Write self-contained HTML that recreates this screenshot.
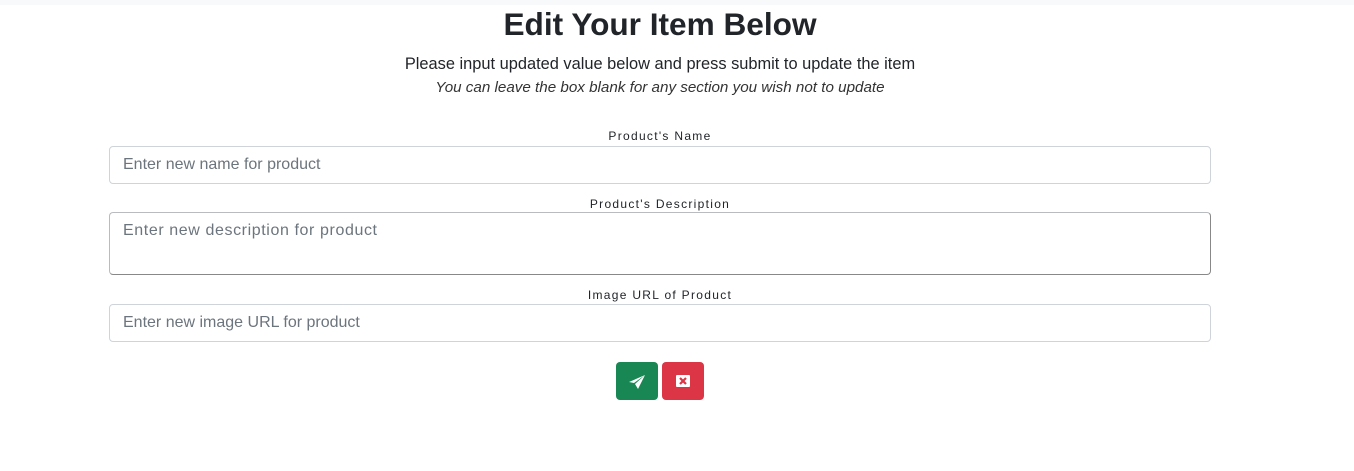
<!DOCTYPE html>
<html><head><style>
body{margin:0;background:#fff;font-family:"Liberation Sans",sans-serif;color:#212529;width:1354px;height:471px;overflow:hidden;position:relative}
.top{position:absolute;left:0;top:0;width:1354px;height:5px;background:#f8f9fa}
.c{position:absolute;left:0;width:1320px;text-align:center;white-space:nowrap}
.box{position:absolute;left:109px;width:1102px;border:1px solid #ced4da;border-radius:4px;background:#fff;font-size:16px;color:#6c757d;box-sizing:border-box;padding-left:13px}
.lbl{font-size:12px;letter-spacing:1.3px}
.btn{position:absolute;top:362px;width:42px;height:38px;border-radius:4px}
</style></head><body>
<div class="top"></div>
<div class="c" style="top:6px;font-size:31.6px;font-weight:bold">Edit Your Item Below</div>
<div class="c" style="top:55px;font-size:16.4px">Please input updated value below and press submit to update the item</div>
<div class="c" style="top:79px;font-size:15.2px;font-style:italic;color:#333">You can leave the box blank for any section you wish not to update</div>
<div class="c lbl" style="top:129px">Product's Name</div>
<div class="box" style="top:146px;height:38px;line-height:36px">Enter new name for product</div>
<div class="c lbl" style="top:197px">Product's Description</div>
<div class="box" style="top:212px;height:63px;padding-top:9px;letter-spacing:0.6px;border-color:#b8bcc0;border-right-color:#888;border-bottom-color:#888">Enter new description for product</div>
<div class="c lbl" style="top:288px">Image URL of Product</div>
<div class="box" style="top:304px;height:38px;line-height:36px">Enter new image URL for product</div>
<div class="btn" style="left:616px;background:#198754">
<svg width="42" height="38" viewBox="0 0 42 38"><path d="M29 13 L13 20 L18 21 Z M29 13 L19 22 L22 27 Z" fill="#fff"/></svg></div>
<div class="btn" style="left:662px;background:#dc3545">
<svg width="42" height="38" viewBox="0 0 42 38"><rect x="14" y="13" width="14" height="12" rx="1" fill="#fff"/><path d="M18 16 L24 22 M24 16 L18 22" stroke="#dc3545" stroke-width="2.2"/></svg></div>
</body></html>
